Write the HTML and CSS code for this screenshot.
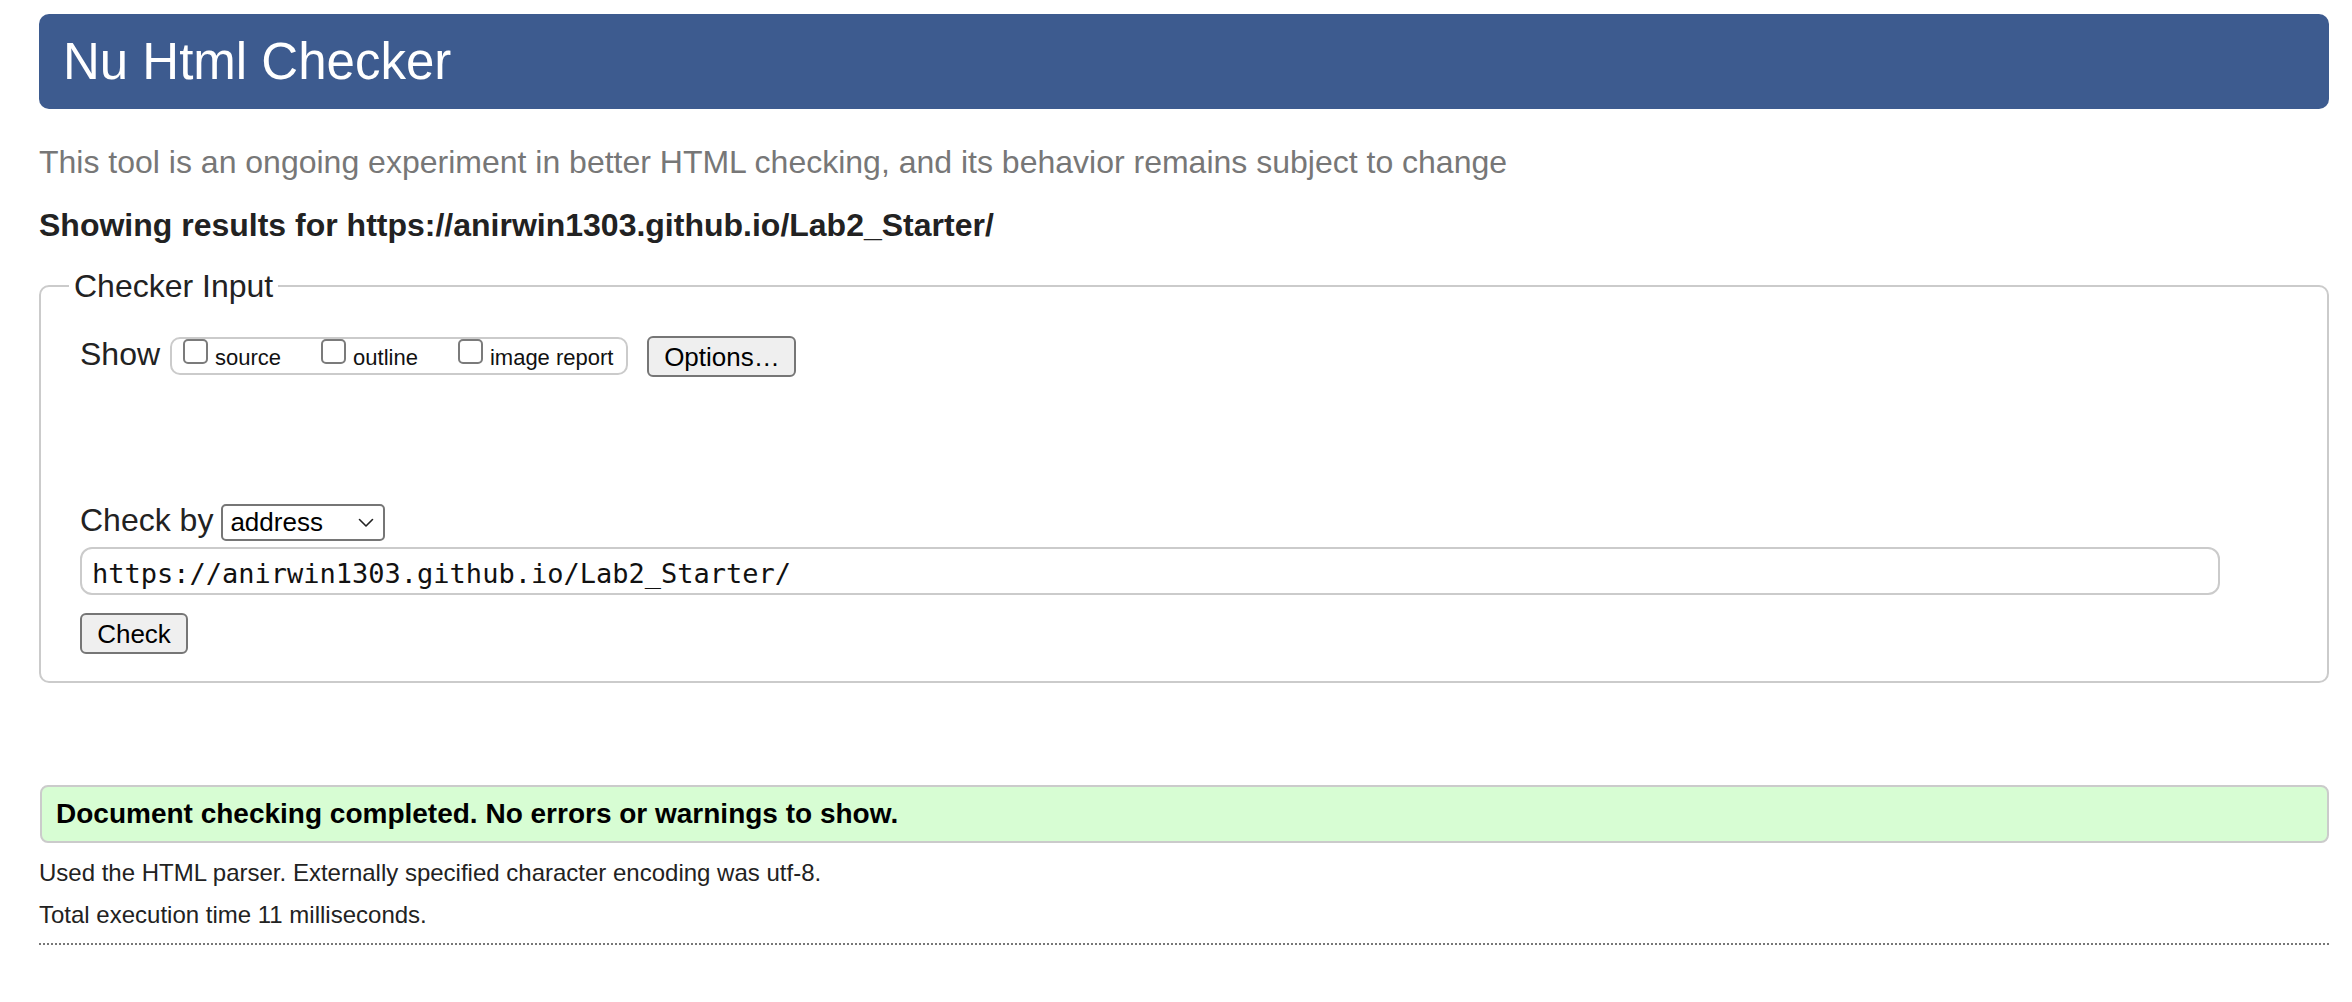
FILE: index.html
```html
<!DOCTYPE html>
<html lang="en">
<head>
<meta charset="utf-8">
<title>Showing results for https://anirwin1303.github.io/Lab2_Starter/ - Nu Html Checker</title>
<link rel="stylesheet" href="styles.css">
</head>
<body>
  <h1 class="banner">Nu Html Checker</h1>
  <p class="tagline">This tool is an ongoing experiment in better HTML checking, and its behavior remains subject to change</p>
  <p class="results-for">Showing results for https://anirwin1303.github.io/Lab2_Starter/</p>

  <fieldset class="input-box">
    <legend class="input-legend">Checker Input</legend>
    <div class="input-body">
      <div class="show-row">
        <span class="row-label">Show</span>
        <span class="show-group">
          <label class="opt"><input type="checkbox" class="cb"><span class="opt-text">source</span></label>
          <label class="opt"><input type="checkbox" class="cb"><span class="opt-text">outline</span></label>
          <label class="opt"><input type="checkbox" class="cb"><span class="opt-text">image report</span></label>
        </span>
        <button class="btn btn-options" type="button">Options…</button>
      </div>

      <div class="checkby-row">
        <span class="row-label">Check by</span>
        <span class="select">
          <span class="select-text">address</span>
          <svg class="chev" width="16" height="10" viewBox="0 0 16 10"><path d="M1.5 1.5 L8 8 L14.5 1.5" fill="none" stroke="#222" stroke-width="1.6" stroke-linecap="round" stroke-linejoin="round"/></svg>
        </span>
      </div>

      <input class="url" type="text" value="https://anirwin1303.github.io/Lab2_Starter/">

      <button class="btn btn-check" type="submit">Check</button>
    </div>
  </fieldset>

  <p class="success">Document checking completed. No errors or warnings to show.</p>
  <p class="details">Used the HTML parser. Externally specified character encoding was utf-8.</p>
  <p class="details details-time">Total execution time 11 milliseconds.</p>
  <hr class="dotted">
</body>
</html>
```

FILE: styles.css
```css
html, body {
  background: #fff;
}

body {
  margin: 0;
  padding: 14px 23px 0 39px;
  font-family: "Liberation Sans", Arial, Helvetica, sans-serif;
  color: #222;
}

.banner {
  margin: 0;
  height: 95px;
  padding: 1px 0 0 24px;
  box-sizing: border-box;
  background: #3d5b8f;
  color: #fff;
  border-radius: 10px;
  font-size: 51px;
  font-weight: normal;
  line-height: 94px;
}

.tagline {
  margin: 33px 0 0;
  font-size: 32px;
  line-height: 40px;
  color: #777;
}

.results-for {
  margin: 23px 0 0;
  font-size: 32px;
  line-height: 40px;
  font-weight: bold;
  color: #222;
}

.input-box {
  margin: 23px 0 0;
  padding: 0;
  border: 2px solid #cbcbcb;
  border-radius: 10px;
  min-inline-size: 0;
}

.input-legend {
  margin-left: 28px;
  padding: 0 5px;
  font-size: 32px;
  line-height: 36px;
  color: #222;
}

.input-body {
  padding: 32px 0 27px 39px;
}

.show-row {
  display: flex;
  align-items: flex-start;
  height: 41px;
}

.row-label {
  font-size: 32px;
  line-height: 36px;
  color: #222;
}

.show-group {
  display: flex;
  align-items: flex-start;
  margin: 1px 0 0 10px;
  height: 34px;
  padding: 0 13px 0 11px;
  border: 2px solid #cbcbcb;
  border-radius: 10px;
}

.opt {
  display: flex;
  align-items: flex-start;
  margin-right: 40px;
}

.opt:last-child {
  margin-right: 0;
}

.cb {
  appearance: none;
  -webkit-appearance: none;
  margin: 0 7px 0 0;
  width: 25px;
  height: 25px;
  box-sizing: border-box;
  border: 2px solid #7b7b7b;
  border-radius: 5px;
  background: #fff;
}

.opt-text {
  font-size: 22px;
  line-height: 31px;
  padding-top: 3px;
  color: #111;
}

.btn {
  font-family: "Liberation Sans", Arial, Helvetica, sans-serif;
  font-size: 26px;
  color: #000;
  background: #efefef;
  border: 2px solid #767676;
  border-radius: 6px;
  height: 41px;
  box-sizing: border-box;
  padding: 0;
  line-height: 30px;
}

.btn-options {
  width: 149px;
  margin-left: 19px;
}

.checkby-row {
  display: flex;
  align-items: flex-start;
  margin-top: 125px;
  height: 39px;
}

.select {
  display: flex;
  align-items: center;
  justify-content: space-between;
  margin: 2px 0 0 8px;
  width: 164px;
  height: 37px;
  box-sizing: border-box;
  padding: 0 9px 0 7px;
  border: 2px solid #767676;
  border-radius: 5px;
  background: #fff;
}

.select-text {
  font-size: 26px;
  line-height: 33px;
  color: #000;
}

.chev {
  display: block;
}

.url {
  display: block;
  margin: 6px 0 0;
  width: 2140px;
  height: 48px;
  box-sizing: border-box;
  padding: 4px 10px 0;
  border: 2px solid #cbcbcb;
  border-radius: 12px;
  font-family: "DejaVu Sans Mono", "Liberation Mono", monospace;
  font-size: 27px;
  color: #111;
  background: #fff;
  outline: none;
}

.btn-check {
  display: block;
  margin-top: 18px;
  width: 108px;
}

.success {
  margin: 102px 0 0 1px;
  height: 58px;
  box-sizing: border-box;
  padding: 0 0 0 14px;
  border: 2px solid #cbcbcb;
  border-radius: 8px;
  background: #d7fdd3;
  font-size: 28px;
  line-height: 54px;
  font-weight: bold;
  color: #000;
}

.details {
  margin: 15px 0 0;
  font-size: 24px;
  line-height: 30px;
  color: #222;
}

.details-time {
  margin-top: 12px;
}

.dotted {
  margin: 13px 0 0;
  height: 0;
  border: 0;
  border-top: 2px dotted #777;
}
```
